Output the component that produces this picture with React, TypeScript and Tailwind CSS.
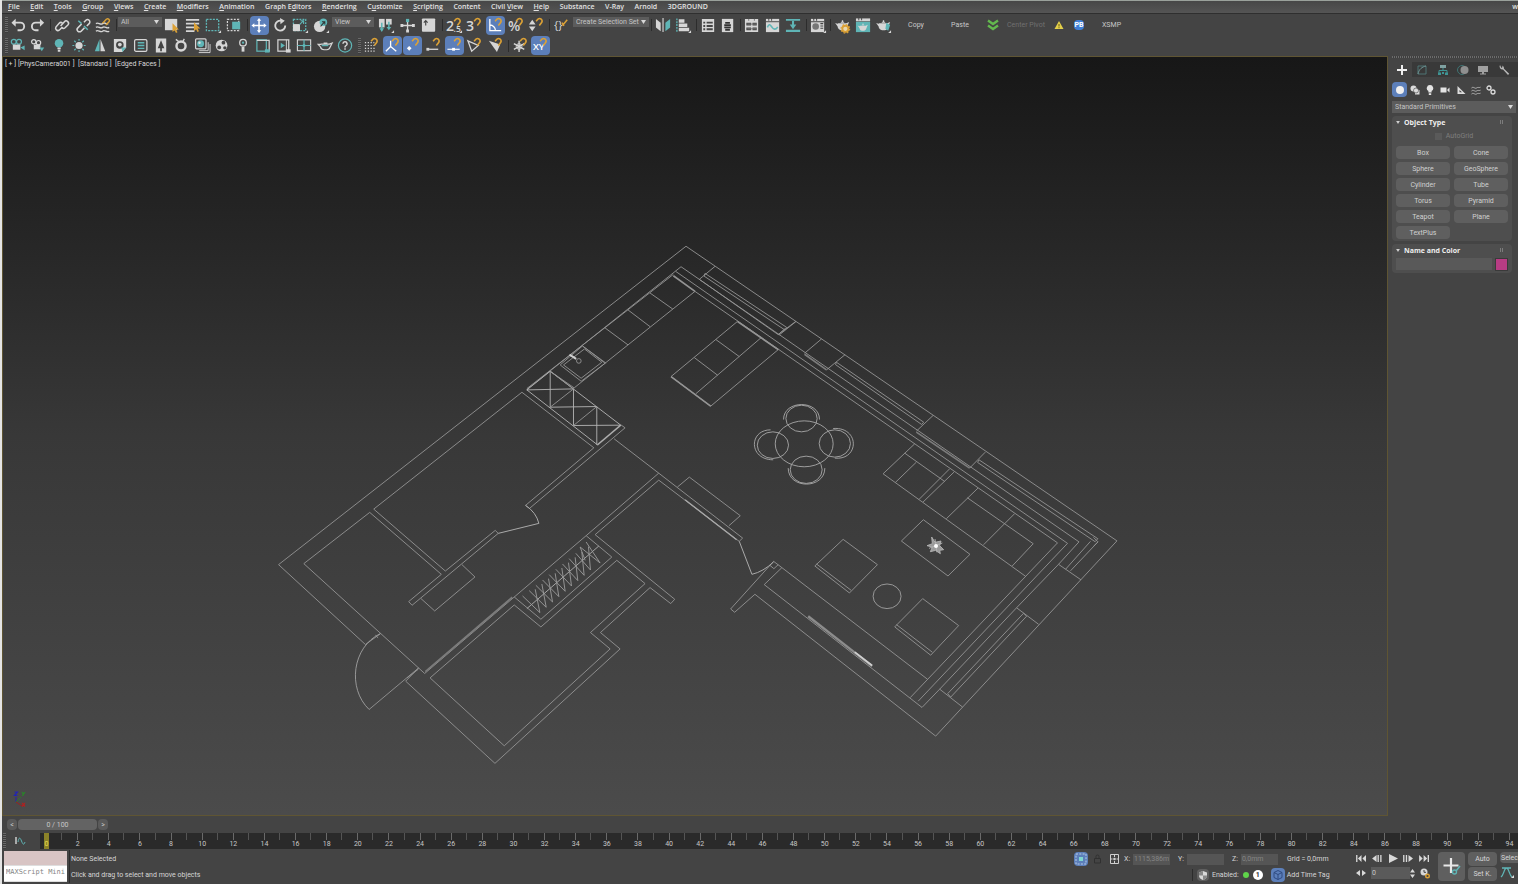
import React from "react";

const L = "#d6d6d6";
const T = "#5fb5b6";
const O = "#dba136";

const Hook = () => <path d="M8.6 4.6 10.6 2.2a2.7 2.7 0 0 1 4 3.4L12 9" fill="none" stroke={O} strokeWidth="1.7" />;
const Corner = () => <path d="M17 14v3h-3z" fill={L} />;
const Teapot = ({ c = L }: { c?: string }) => (
  <path d="M4.5 6.5h8.5l3-1.2-2 5c-.6 2.2-2 3.6-3.6 3.6H7.5C5.500 13.900 4 12 3.700 9.800L1.200 6.400l2.600.8zM7 6c.3-1.600 3.700-1.600 4 0zM8.300 3.400h1.400v1.600H8.300z" fill={c} />
);
const Line = ({ d, c = L, w = 1.6 }: { d: string; c?: string; w?: number }) => (
  <path d={d} fill="none" stroke={c} strokeWidth={w} />
);
const Fill = ({ d, c = L }: { d: string; c?: string }) => <path d={d} fill={c} fillRule="evenodd" />;

const icons: Record<string, React.ReactNode> = {
  undo: <><Line d="M4 6h7a4 4 0 0 1 0 8H8" w={2} /><Fill d="M1.500 6 6 1.800v8.400z" /></>,
  redo: <><Line d="M12 6H6a4 4 0 0 0 0 8h3" w={2} /><Fill d="M15 6l-4.500-4.200v8.400z" /></>,
  link: <><Line d="M7 9.500 11 5a2.500 2.500 0 0 1 3.700 3.400l-3 3a2.500 2.500 0 0 1-3.500-.2" /><Line d="M9 6.500a2.500 2.500 0 0 0-3.500.2l-3.500 4A2.500 2.500 0 0 0 5.500 14L9 10.500" /></>,
  unlink: <><Line d="M9.500 5.500 11.500 3.500A2.400 2.400 0 0 1 15 7l-2.500 2.500" /><Line d="M7 7.500 3 11.500A2.400 2.400 0 0 0 6.500 15L10 11.500" /><Line d="M3.500 4 7 7M9.500 9.500l4 4" c={T} /></>,
  bind: <><Line d="M1 7c2.500-2 4.500 2 7 0s3.500 1 6 0M1 11c2.500-2 4.500 2 7 0s4.500 2 7 0M1 15c2.500-2 4.500 2 7 0s4.500 2 7 0" w={1.400} /><Line d="M8 6.500 12 2.500a1.900 1.900 0 0 1 3 2.300L11.500 8.500" c={O} w={1.500} /></>,
  select: <><Fill d="M1 2h13v12H1z" /><Fill d="M9 6.500v9.500l2.200-2 1.500 3 1.600-.9-1.500-2.800h2.900z" c={O} /></>,
  selectList: <><Fill d="M1 2h14v2H1zM1 6h14v2H1zM1 10h9v2H1zM1 14h9v2H1z" /><Fill d="M9.500 5.500v9.500l2.200-2 1.500 3 1.600-.9-1.500-2.800h2.900z" c={O} /></>,
  region: <><rect x="1.500" y="2.500" width="13" height="12" fill="none" stroke={T} strokeWidth="1.400" strokeDasharray="2.200 1.200" /><Corner /></>,
  crossing: <><rect x="1.500" y="2.500" width="12" height="12" fill="none" stroke={L} strokeWidth="1.300" strokeDasharray="2 1.400" /><Fill d="M6.500 5h8.500v8H6.500z" c={T} /></>,
  move: <><Line d="M8.500 3v12M2.500 9h12" c="#fff" /><Fill d="m8.500 1 2.300 3H6.200zM8.500 17l2.300-3H6.200zM.5 9l3-2.300v4.600zM16.500 9l-3-2.300v4.600z" c="#fff" /></>,
  rotate: <><Line d="M10 4A5.300 5.300 0 1 0 14 9" w={2} /><Fill d="m8.500 1 5 3-4.500 3.800z" /></>,
  scale: <><rect x="1.500" y="2.500" width="13" height="12" fill="none" stroke={T} strokeWidth="1.400" strokeDasharray="2 1.200" /><Fill d="M1 7.500h7.500V15H1z" /><Line d="m8 8 4-4M9 4h3.300v3.300" c={T} w={1.200} /><Corner /></>,
  place: <><circle cx="7" cy="10" r="6" fill={L} /><circle cx="11" cy="5.500" r="4" fill={T} /><Line d="m8 10 4-4.500M9.500 5h3v3" c="#333" w={1.100} /><Corner /></>,
  pivot: <><Fill d="M1 2h6v9H1z" /><Fill d="M8.500 2h6v6h-6z" /><Line d="M4 6v8M11.500 5v7" c={T} /><Fill d="m4 16-2.400-4h4.800zM11.500 14 9 10.500h5z" c={T} /><Corner /></>,
  manip: <><Line d="M8 3v12M2 9h12" w={1.400} /><Fill d="M6.300 2h3.400v3.400H6.300z" c={T} /><Fill d="M6.500 13.300h3v3h-3zM.5 7.500h3v3h-3zM12.700 7.500h3v3h-3z" /></>,
  keyboard: <><rect x="1" y="1.500" width="14" height="14" rx="1" fill={L} /><Line d="M5 9V4M3 6l2-2.300L7 6" c="#444" w={1.200} /></>,
  snap25: <><text x="0" y="15" fontSize="15" fontWeight="600" fill={L} fontFamily="Open Sans, sans-serif">2</text><text x="8" y="16" fontSize="9" fontWeight="600" fill={L} fontFamily="Open Sans, sans-serif">.5</text><Hook /><Corner /></>,
  snap3: <><text x="0" y="15" fontSize="15" fontWeight="600" fill={L} fontFamily="Open Sans, sans-serif">3</text><Hook /></>,
  snapAngle: <><Line d="M3 2v12.500h12M3 8.500a6 6 0 0 1 6 6" c="#fff" w={1.400} /><Hook /></>,
  snapPercent: <><text x="0" y="15" fontSize="15" fontWeight="600" fill={L} fontFamily="Open Sans, sans-serif">%</text><Hook /></>,
  snapSpinner: <><Fill d="m4.500 3 3.500 5H1zM4.500 15l3.500-5H1z" /><Hook /></>,
  named: <><text x="0" y="13" fontSize="12" fill={L} fontFamily="Open Sans, sans-serif">{"{}"}</text><Line d="m9 9 5-6M8.500 6l2 3.500" c={O} w={1.600} /></>,
  mirror: <><Fill d="M1 2l5 4v9l-5-4z" /><Fill d="M16 2l-5 4v9l5-4z" c={T} /><Line d="M8.500 1v15" w={1.200} /></>,
  align: <><path d="M2 1.500v14" stroke={T} strokeWidth="1.400" strokeDasharray="2 1" /><Fill d="M4 2.500h6v3.500H4zM4 7h9v3.500H4zM4 11.500h11V15H4z" /><Corner /></>,
  layers: <><Fill d="M2 2h13v14H2zM3.500 5v2h2V5zM7 5v2h6.500V5zM3.500 8.500v2h2v-2zM7 8.500v2h6.500v-2zM3.500 12v2h2v-2zM7 12v2h6.500v-2z" /></>,
  ribbon: <><Fill d="M2 2h12v14H2z" /><Line d="M5.500 6.200h5M4.500 8.500h7M4.500 11h7M5.500 13.500h5" c="#333" w={1.900} /></>,
  curves: <><Fill d="M1 2h14v14H1zM2.500 6v3h5V6zM9 6v3h4.500V6zM2.500 11v3h5v-3zM9 11v3h4.500v-3z" /><Line d="M3.500 7.500h10M3.500 12.500h10M5 2v2M11 2v2" c="#777" w={1} /></>,
  schematic: <><Fill d="M1 2h14v14H1z" /><Line d="M1 5h14M4 1v3M7 1v3" c="#444" w={1} /><Line d="M2.500 11c2-5 3.500-2 5 0s3.500 3 6-.5" c={T} w={1.700} /></>,
  dope: <><Fill d="M1 2h15v2H1zM1 13.500h15V16H1z" c={T} /><Line d="M8.500 4v7" c={T} w={2.200} /><Fill d="M5 8h7l-3.500 5z" c={T} /></>,
  material: <><Fill d="M1 2h14v14H1z" /><circle cx="6" cy="10" r="3.500" fill="#777" /><Line d="M1 5h14M4 1v3M7 1v3M11 7h3M11 9.500h3M11 12h3" c="#444" w={1.100} /><Corner /></>,
  renderSetup: <><Teapot /><circle cx="12" cy="12.500" r="3.200" fill="#e8d8b0" stroke={O} strokeWidth="2" /><circle cx="12" cy="12.500" r="4.600" fill="none" stroke={O} strokeWidth="1.200" strokeDasharray="1.800 1.800" /></>,
  renderFrame: <><Fill d="M1 5h15v11H1z" c={T} /><Fill d="M1 1.500h15v3H1z" /><Line d="M4 1v2.500M7 1v2.500" c="#444" w={1} /><g transform="translate(2 4.500) scale(.72)"><Teapot /></g></>,
  render: <><Teapot /><Fill d="M12 6l4 2.500-2 6-3-2z" c={T} /><Corner /></>,
  vCam: <><circle cx="4" cy="5" r="2.600" fill="none" stroke={T} strokeWidth="1.300" /><circle cx="9.500" cy="5" r="2.600" fill="none" stroke={T} strokeWidth="1.300" /><Fill d="M3 8h8v5.500H3z" /><Fill d="m11 11 4.500-2v5z" c={T} /></>,
  vCam2: <><circle cx="4" cy="5" r="2.300" fill="none" stroke={L} strokeWidth="1.300" /><circle cx="9" cy="6" r="2.300" fill="none" stroke={L} strokeWidth="1.300" /><Fill d="M4 8h7v5H4z" /><Fill d="m12.500 15-2.500-4h5z" c={T} /></>,
  bulb: <><circle cx="8.500" cy="6.500" r="4.500" fill={T} /><Fill d="M6.800 11h3.500v2H6.800zM7.200 13.600h2.700v2H7.200z" /></>,
  sun: <><circle cx="8.500" cy="9" r="3.800" fill={L} /><path d="M8.500 2v2M8.500 14v2M1.500 9h2M13.500 9h2M3.500 4 5 5.500M12 12.500l1.500 1.500M13.500 4 12 5.500M5 12.500 3.500 14" stroke={T} strokeWidth="1.300" /></>,
  prism: <><Fill d="M8 2v13H3z" c={T} /><Fill d="M9 2l5 13H9z" /></>,
  hdri: <><Fill d="M2 2h13v9l-4 5H2z" /><circle cx="8.300" cy="8.500" r="4" fill="#444" /><circle cx="8.300" cy="8" r="2" fill={L} /><Fill d="M10 11h5l-4 5z" c={T} /></>,
  notes: <><rect x="1.700" y="2.700" width="13" height="12.500" rx="1.500" fill="none" stroke={L} strokeWidth="1.300" /><Line d="M5 6h7M5 9h7M5 12h7" c={T} w={1.500} /></>,
  tree: <><Fill d="M3 1.500h11v15H3zM8.500 3.500 5 12h2.600v3h1.800v-3H12z" /></>,
  ring: <><circle cx="8.500" cy="9.500" r="4.800" fill="none" stroke={L} strokeWidth="2.600" /><Line d="m3 2.500 4 3M12 2l-2 3.500" w={1.400} /></>,
  stack: <><Line d="M5.500 14.500h9.500v-9" w={1} /><Line d="M5 16.500h12v-9" w={1} /><rect x="1.700" y="2" width="11" height="10.500" rx="1" fill="none" stroke={L} strokeWidth="1.300" /><circle cx="7" cy="7.200" r="3.700" fill={T} /><circle cx="5.800" cy="6" r="1.300" fill="#ddd" /></>,
  palette: <><circle cx="8" cy="9" r="6.200" fill={L} /><circle cx="10" cy="6" r="2" fill="#444" /><circle cx="5.500" cy="11" r="2" fill="#444" /><circle cx="11.500" cy="11.500" r="1.800" fill="#444" /></>,
  lamp: <><circle cx="8.500" cy="6" r="3.500" fill="none" stroke={L} strokeWidth="1.400" /><circle cx="8.500" cy="6" r="1.200" fill={T} /><Fill d="M7 10.500h3v5H7z" /></>,
  winA: <><rect x="2" y="3" width="10" height="12" fill="none" stroke={T} strokeWidth="1.300" /><Line d="M2 3.500h13v12" w={1.300} /><Fill d="M10.500 13h5v3.500h-5z" c={T} /></>,
  winB: <><rect x="2" y="3" width="11.500" height="12" fill="none" stroke={L} strokeWidth="1.300" /><Line d="M11 3v12" w={1} /><Fill d="m5 6 4.500 3L5 12z" c={T} /><Fill d="M10.500 13h5v3.500h-5z" /></>,
  grid4: <><rect x="1.500" y="3" width="14" height="11.500" fill="none" stroke={L} strokeWidth="1.200" /><Line d="M1.500 9h14M8.500 3v11.500" c={T} w={1.300} /><circle cx="8.500" cy="9" r="1.600" fill={T} /></>,
  pot: <g transform="translate(0 1)"><path d="M4.500 6.500h8.500l3-1-2 4c-.6 1.800-2 3-3.600 3H7.500c-2 0-3.500-1.500-3.800-3L1.200 6.800h2.600zM7 5.500h4" fill="none" stroke={L} strokeWidth="1.300" /><path d="M5 8h7" stroke={T} strokeWidth="1.500" /></g>,
  help: <><circle cx="8.500" cy="9" r="7" fill="none" stroke={T} strokeWidth="1.300" /><Line d="M6.300 7.200a2.200 2.200 0 1 1 2.900 2.200c-.5.300-.7.700-.7 1.600M8.500 12v1.600" /></>,
  snapGrid: <><path d="M2 6h10M2 9h12M2 12h12M2 15h12" stroke={L} strokeWidth="1.300" strokeDasharray="1.300 1.700" /><Hook /></>,
  snapAxis: <><Line d="M7 4v6l-5 5M7 10l6 5" c="#fff" w={1.400} /><Hook /></>,
  snapPoint: <><Fill d="M5.500 9.500 8 12l-2.500 2.500L3 12z" c="#fff" /><Hook /></>,
  snapEnd: <><Line d="M2 13h12" w={1.400} /><Fill d="M1.500 11.500h3v3h-3z" /><Hook /></>,
  snapMid: <><Line d="M1.500 13h13" c="#fff" w={1.200} /><Fill d="M6.500 11.500h3v3h-3z" c="#fff" /><Hook /></>,
  snapFace: <><path d="m2 4 11 5-7 6z" fill="none" stroke={L} strokeWidth="1.400" /><Hook /></>,
  snapSolid: <><Fill d="m2 4 12 4-3.500 8z" /><Hook /></>,
  freeze: <><Line d="M7.500 4v12M2 7l11 6M13 7 2 13" w={1.500} /><circle cx="7.500" cy="10" r="3" fill="none" stroke={L} strokeWidth="1" /><Hook /></>,
  snapXY: <><text x="1" y="14" fontSize="10" fontWeight="600" fill="#fff" fontFamily="Open Sans, sans-serif">XY</text><Hook /></>,
};

function Tool({ name, on }: { name: string; on?: boolean }) {
  return (
    <button aria-label={name} className="flex h-[20px] flex-1 items-center justify-center">
      <span className={on ? "flex h-[19px] w-[19px] items-center justify-center rounded-sm bg-[#5c7fba]" : "flex h-[19px] w-[19px] items-center justify-center"}>
        <svg width="17" height="17" viewBox="0 0 18 18" aria-hidden="true">{icons[name]}</svg>
      </span>
    </button>
  );
}

function Group({ names, on = [], w }: { names: string[]; on?: string[]; w: string }) {
  return (
    <div className={`flex shrink-0 ${w}`}>
      {names.map((n) => <Tool key={n} name={n} on={on.includes(n)} />)}
    </div>
  );
}

const Sep = () => <div className="flex w-1 shrink-0 justify-center"><span className="h-3 w-px bg-[#2c2c2c]" /></div>;
const Grip = () => <div className="h-4 w-[3px] shrink-0 bg-[repeating-linear-gradient(#6a6a6a_0_1px,#3c3c3c_1px_2px)]" />;

function Drop({ label, value, cls }: { label: string; value: string; cls: string }) {
  return (
    <div className={`relative shrink-0 ${cls}`}>
      <select aria-label={label} className="h-full w-full appearance-none rounded-none bg-[#5c5c5c] pl-[3px] leading-none text-[#c4c4c4] outline-none">
        <option>{value}</option>
      </select>
      <svg className="pointer-events-none absolute top-1/2 right-[3px] -translate-y-1/2" width="5" height="4" viewBox="0 0 5 4" aria-hidden="true"><path d="M0 0h5L2.500 4z" fill="#d8d8d8" /></svg>
    </div>
  );
}

const menus = ["File", "Edit", "Tools", "Group", "Views", "Create", "Modifiers", "Animation", "Graph Editors", "Rendering", "Customize", "Scripting", "Content", "Civil View", "Help", "Substance", "V-Ray", "Arnold", "3DGROUND"];
const accel: Record<string, number> = { File: 0, Edit: 0, Tools: 0, Group: 0, Views: 0, Create: 0, Modifiers: 0, Animation: 0, "Graph Editors": 7, Rendering: 0, Customize: 1, Scripting: 0, "Civil View": 6, Help: 0 };

function MenuBar() {
  return (
    <nav className="flex h-[14px] shrink-0 items-center justify-between overflow-hidden border-t border-b border-t-[#9aa19b] border-b-[#2f2f2f] bg-linear-to-b from-[#474747] to-[#555555] pb-px pl-[6px] font-['Open_Sans',sans-serif] text-[7px] leading-none font-semibold whitespace-nowrap text-[#e2e2e2]">
      <div className="flex w-[700px] justify-between">
        {menus.map((m) => {
          const i = accel[m];
          return (
            <button key={m} className="shrink-0">
              {i === undefined ? m : <>{m.slice(0, i)}<u>{m[i]}</u>{m.slice(i + 1)}</>}
            </button>
          );
        })}
      </div>
      <span>w</span>
    </nav>
  );
}

function Toolbars() {
  return (
    <header className="shrink-0 overflow-hidden bg-[#444444] text-[#c8c8c8]">
      <div className="flex h-[21px] items-center pt-px pl-[3px]">
        <Grip />
        <Group names={["undo", "redo"]} w="w-10" />
        <Sep />
        <Group names={["link", "unlink", "bind"]} w="w-[62px]" />
        <Sep />
        <Drop label="Selection filter" value="All" cls="h-[10px] w-11 self-start mt-[2px]" />
        <Group names={["select", "selectList", "region", "crossing"]} w="w-[83px]" />
        <Sep />
        <Group names={["move", "rotate", "scale", "place"]} on={["move"]} w="w-[83px]" />
        <Drop label="Reference coordinate system" value="View" cls="h-[10px] w-[42px] self-start mt-[2px]" />
        <Group names={["pivot"]} w="w-6" />
        <Group names={["manip", "keyboard"]} w="w-[42px]" />
        <Sep />
        <Group names={["snap25", "snap3", "snapAngle", "snapPercent", "snapSpinner"]} on={["snapAngle"]} w="w-[103px]" />
        <Sep />
        <Group names={["named"]} w="w-[22px]" />
        <Drop label="Named selection set" value="Create Selection Set" cls="h-[10px] w-[76px] self-start mt-[2px]" />
        <Sep />
        <Group names={["mirror", "align"]} w="w-[41px]" />
        <Sep />
        <Group names={["layers", "ribbon"]} w="w-10" />
        <Sep />
        <Group names={["curves", "schematic", "dope"]} w="w-[62px]" />
        <Sep />
        <Group names={["material"]} w="w-5" />
        <Sep />
        <Group names={["renderSetup", "renderFrame", "render"]} w="w-[62px]" />
        <button className="w-11 text-center">Copy</button>
        <button className="w-11 text-center">Paste</button>
        <button className="ml-[5px] flex items-center gap-2 whitespace-nowrap text-[#707070]">
          <svg width="12" height="12" viewBox="0 0 12 12" aria-hidden="true"><path d="m1 1.500 5 3.500 5-3.500M1 6.500 6 10l5-3.500" fill="none" stroke="#63b94e" strokeWidth="2.400" /></svg>
          Center Pivot
        </button>
        <button aria-label="Warning" className="ml-[9px]">
          <svg width="10" height="10" viewBox="0 0 10 10" aria-hidden="true"><path d="M5 1 9.500 9H.500z" fill="#e3cf4a" /><path d="M5 4v2.500M5 7.200v1" stroke="#6a5a10" strokeWidth="1" /></svg>
        </button>
        <button className="ml-[10px] h-[10px] w-[10px] rounded-sm bg-[#3f7fd6] leading-none font-bold text-white">PB</button>
        <button className="ml-[18px]">XSMP</button>
      </div>
      <div className="flex h-[21px] items-center pl-[3px]">
        <Grip />
        <Group names={["vCam", "vCam2", "bulb", "sun", "prism", "hdri", "notes", "tree", "ring", "stack", "palette", "lamp", "winA", "winB", "grid4", "pot", "help"]} w="w-[348px]" />
        <div className="w-[2px]" />
        <Grip />
        <Group names={["snapGrid", "snapAxis", "snapPoint", "snapEnd", "snapMid", "snapFace", "snapSolid"]} on={["snapAxis", "snapPoint", "snapMid"]} w="w-[145px]" />
        <Sep />
        <Group names={["freeze", "snapXY"]} on={["snapXY"]} w="w-[41px]" />
      </div>
    </header>
  );
}

const range = (n: number) => Array.from({ length: n }, (_, i) => i);

function FloorPlan() {
  const s = "scale(.33333)";
  return (
    <svg className="h-full w-full" viewBox="3 56 1384 759" fill="none" stroke="#949494" strokeWidth="0.900" role="img" aria-label="Wireframe floor plan">
      {/* Shell: outer and inner walls */}
      <path d="M365 644.300 278 564.300 686 245.500 1117.500 540.500 936 736 755 594 734.700 612 730.700 608.700 773.700 561 782 567.300 927.700 679M365 644.300 380 633.500" />
      <path d="M782 567.300 764.300 584.300 922.300 707.300 940 689 963 707M940 689 1017 607.500 1039 624M1017 607.500 1059 564 1081.500 579.500M1059 564 1079.500 541.500" />
      <path d="M910.500 697.500 1058 542.500 695 290.700M918.500 701 1068 543 675.700 270.700M681 266 1079.500 541.500M681 266 526.500 389" />
      <path d="M1024 613 948 693.500M1027 616 951 697M1024 613l3 3M948 693.500l3 3.500M1091 541l-25 28M1098.500 541.500 1071 570.500M1094 537l4.500 4.500-4 4" />
      <path d="M521.700 391.700 593.700 447.300 525.300 505 529.300 508 625 427.300 621 424.500M521.700 391.700 373.300 508.700 445 570.700 495 530 498 533 411.700 605 408.300 601.300 441 574 369.300 512 303.300 563.300 424.300 673.300 586 535.300 658.700 472.700M614 438.300 658.700 472.700 742.700 537.700 739.300 541 658.700 479.700 595 534.300 674.700 599 670.700 603.300 650 587.300 600.300 632.300 620 648.700 494.700 763.300 405.300 681 418.300 667.700" />
      <path d="M429.700 677.700 514 604.700 540.700 626.700 616.700 560 645 583.300 590.300 632.300 610 648.700 504 745.700Z" />
      <path d="M514 596.700 540.700 619 611.700 556.700 586 535.300" />
      <path d="M425 671.500 512 597" strokeWidth="1.800" stroke="#7c7c7c" />

      {/* Kitchen run, wardrobe and island */}
      <g transform={`translate(500 230) ${s}`} strokeWidth="2.700">
        <path d="M598 146 645 107M598 146 835 312 888 272M835 312l20-18M615 128 860 290M612 136 855 298M615 128l-3 8M860 290l-5 8" />
        <path d="M585 182 222 472 150 422M520 131 80 474" />
        <path d="M520 135 585 182M713 273 835 357M513 438 632 527M362 584 292 643" strokeWidth="5" />
        <path d="M450 187 518 235M384 238 450 288M315 292 384 343M247 346 318 398" />
        <path d="M247 346 315 398 243 452 180 403ZM253 355 305 395 243 443 190 403Z" />
        <path d="M208 372 228 385" stroke="#d0d0d0" strokeWidth="6" />
        <circle cx="236" cy="391" r="7" />
        <path d="M80 478 150 422 362 584 292 643ZM150 422V530M220 475V585M290 528V643M80 478 220 475M150 530 290 528M220 585 362 584" stroke="#b4b4b4" />
        <path d="M220 475 150 530M290 528 220 585M150 422 220 475" />
        <path d="M513 438 713 272 835 357 632 527ZM587 490 785 320M648 327 718 378M583 381 653 434" />
      </g>

      {/* Window bays, dining set, sofa and armchair */}
      <g transform={`translate(720 300) ${s}`} strokeWidth="2.700">
        <path d="M178 103 228 63M305 115 254 158M320 208 376 162M590 392 640 345M750 503 797 455" />
        <path d="M254 161 320 208M590 395 750 503" strokeWidth="5" stroke="#7c7c7c" />
        <path d="M350 185 612 365 606 372 347 192ZM778 478 1135 715 1127 724 774 486Z" />
        <g stroke="#a8a8a8">
          <ellipse cx="253" cy="430" rx="87" ry="69" />
          <ellipse cx="245" cy="354" rx="47" ry="40" />
          <ellipse cx="159" cy="434" rx="47" ry="40" />
          <ellipse cx="345" cy="429" rx="47" ry="41" />
          <ellipse cx="259" cy="508" rx="48" ry="41" />
          <path d="M191 357C191 297 299 297 299 357M152 388C86 388 86 478 160 478M340 384C420 378 420 480 345 473M205 503C205 567 315 567 315 503" />
        </g>
        <path d="M490 520 585 430M490 520 918 828M555 458 675 543M527 546 590 485M598 597 690 505M610 605 703 515M680 655 775 563M743 592 941 730 878 797M792 733 885 640" />
        <path d="M611 658 751 762 685 827 545 722Z" />
        <path d="M370 717 473 793 389 878 285 797ZM290 791 394 870" />
        <path d="M636 710 646 726 664 722 660 736 672 748 660 750 662 760 648 750 632 754 638 740 622 736 638 730ZM628 744 668 728M646 716 652 756" fill="#9a9a9a" stroke="#b4b4b4" />
        <circle cx="649" cy="737" r="6" fill="#fff" stroke="none" />
      </g>

      {/* Living room: side table, chair, console and TV unit */}
      <g transform={`translate(660 460) ${s}`} strokeWidth="2.700">
        <ellipse cx="682" cy="408" rx="42" ry="37" stroke="#a0a0a0" />
        <path d="M789 415 897 496 813 585 705 500ZM710 493 818 576" />
        <path d="M52 80 88 50 241 166 207 196M330 315 342 325 355 313" />
        <path d="M75 118 230 238" strokeWidth="4" stroke="#a8a8a8" />
        <path d="M238 243 276 342Q310 334 341 305" stroke="#aaaaaa" strokeWidth="3" />
        <path d="M445 468 637 618" strokeWidth="7" stroke="#8c8c8c" />
        <path d="M585 576 637 616" stroke="#cfcfcf" strokeWidth="5" />
      </g>

      {/* Doors, cloakroom cabinet and closet hangers */}
      <g transform={`translate(260 380) ${s}`} strokeWidth="2.700">
        <path d="M714 459 836 429Q828 396 796 375" stroke="#aaaaaa" strokeWidth="3" />
        <path d="M605 553 644 590 523 692 482 655M475 863 326 988M345 765l8 8M440 893l34-26" />
        <path d="M326 988C260 925 275 800 360 760" stroke="#a0a0a0" />
        <path d="M800 685 1016 497" stroke="#b0b0b0" />
        {range(9).map((i) => (
          <path key={i} d={`M${787 + i * 20} ${647 - i * 16}l${52 - i} 50l${-14 + i} -70`} stroke="#9c9c9c" />
        ))}
        <path d="M978 485 1020 548 960 500 975 540" stroke="#9c9c9c" />
      </g>
    </svg>
  );
}

function Viewport() {
  return (
    <main className="relative min-w-0 flex-1 overflow-hidden border border-[#5f5533] bg-linear-to-b from-[#171717] via-[#383838] to-[#4b4b4b] text-[#d8d8d8]">
      <FloorPlan />
      <p className="absolute top-[3px] left-[2px] whitespace-pre">[ + ] [PhysCamera001 ]  [Standard ]  [Edged Faces ]</p>
      <svg className="absolute bottom-[6px] left-[10px]" width="18" height="18" viewBox="0 0 18 18" aria-hidden="true">
        <path d="M3 11V6" stroke="#2525a8" /><path d="m3 11 5-5" stroke="#2a7a2a" /><path d="m3 11 6 4" stroke="#9a2020" />
        <path d="M1.500 1h3l-3 3.500h3" fill="none" stroke="#2222b8" strokeWidth="1.200" />
        <path d="m9 1 1.500 2L12 1M10.500 3 9.500 5" fill="none" stroke="#268a26" strokeWidth="1.200" />
        <path d="m9 12 3 3.500M12 12l-3 3.500" fill="none" stroke="#b02020" strokeWidth="1.200" />
      </svg>
    </main>
  );
}

const tabIcons: [string, React.ReactNode][] = [
  ["Create", <path key="a" d="M6 1v10M1 6h10" stroke="#f0f0f0" strokeWidth="2" />],
  ["Modify", <g key="b" fill="none"><path d="M2 2h8v8H2z" stroke="#4f7474" /><path d="M2 10C3 5 6 3 10 2" stroke="#6e9494" /></g>],
  ["Hierarchy", <g key="c"><path d="M3 1h6v3H3z" fill="#7fa0a0" /><path d="M6 4v3M2 9V6.500h8V9" stroke="#3f9494" fill="none" /><path d="M1 8.500h3V11H1zM8 8.500h3V11H8zM5 8h2v2H5z" fill="#3f9494" /></g>],
  ["Motion", <g key="d"><circle cx="5" cy="6" r="4.500" fill="none" stroke="#3f7474" /><circle cx="7.500" cy="6" r="4" fill="#8f8f8f" /></g>],
  ["Display", <path key="e" d="M1 2h10v6H1zM5 8h2v1.500h2v1H3v-1h2z" fill="#a0a0a0" />],
  ["Utilities", <path key="f" d="M2 1a3 3 0 0 0 3 4.500L10 11l1.200-1.200L6 4.800A3 3 0 0 0 4 1.500L4.500 3 3.500 4z" fill="#b8b8b8" />],
];

const catIcons: [string, React.ReactNode][] = [
  ["Geometry", <circle key="a" cx="5" cy="5" r="4" fill="#f0f0f0" />],
  ["Shapes", <g key="b" fill="#dcdcdc"><circle cx="3.500" cy="3.500" r="3" /><path d="M5 5h4.500v4.500H5z" /><circle cx="6" cy="5.500" r="2.500" stroke="#444" strokeWidth=".6" /></g>],
  ["Lights", <path key="c" d="M5 0a3.200 3.200 0 0 0-1.600 6v1.500h3.200V6A3.200 3.200 0 0 0 5 0zM3.800 8.200h2.400V10H3.800z" fill="#e4e4e4" />],
  ["Cameras", <path key="d" d="M.5 2.500h6v5h-6zM7 5l2.500-2.500v5z" fill="#e4e4e4" />],
  ["Helpers", <path key="e" d="M1.500 1v8h8zM3.500 5v2.200h2.500z" fill="#dcdcdc" fillRule="evenodd" />],
  ["Space Warps", <path key="f" d="M.5 3c2-2 3.500 1.200 5 0s2.500 0 4-.8M.5 6c2-2 3.500 1.200 5 0s2.500 0 4-.8M.5 9c2-2 3.500 1.200 5 0s2.500 0 4-.8" fill="none" stroke="#b4b4b4" />],
  ["Systems", <g key="g" fill="none" stroke="#dcdcdc" strokeWidth="1.300"><circle cx="3" cy="3" r="2" /><circle cx="7" cy="7" r="2" /></g>],
];

function Rollout({ title, children }: { title: string; children: React.ReactNode }) {
  return (
    <section className="mr-[6px] rounded-sm bg-[#4e4e4e] px-1 pb-[2px]">
      <h2 className="flex h-3 items-center gap-1 font-['Open_Sans',sans-serif] text-[7px] leading-none font-bold text-[#ededed]">
        <svg width="4" height="3" viewBox="0 0 5 4" aria-hidden="true"><path d="M0 0h5L2.500 4z" fill="#d0d0d0" /></svg>
        {title}
        <span className="mr-1 ml-auto h-1 w-1 bg-[repeating-linear-gradient(90deg,#7c7c7c_0_1px,transparent_1px_2px)]" />
      </h2>
      {children}
    </section>
  );
}

function CommandPanel() {
  return (
    <aside className="w-[130px] shrink-0 overflow-hidden bg-[#444444] pl-1 text-[#d0d0d0]">
      <div className="h-[2px] bg-[repeating-linear-gradient(90deg,#6c6c6c_0_1px,#3e3e3e_1px_2px)]" />
      <div className="mt-1 flex h-[15px] bg-[#393939] pr-1">
        {tabIcons.map(([n, icon], i) => (
          <button key={n} aria-label={n} className={i === 0 ? "flex flex-1 items-center justify-center bg-[#444444]" : "flex flex-1 items-center justify-center"}>
            <svg width="12" height="12" viewBox="0 0 12 12" aria-hidden="true">{icon}</svg>
          </button>
        ))}
      </div>
      <div className="mt-[5px] flex w-[107px]">
        {catIcons.map(([n, icon], i) => (
          <button key={n} aria-label={n} className={i === 0 ? "flex h-[15px] flex-1 items-center justify-center rounded-sm bg-[#5c7fba]" : "flex h-[15px] flex-1 items-center justify-center"}>
            <svg width="10" height="10" viewBox="0 0 10 10" aria-hidden="true">{icon}</svg>
          </button>
        ))}
      </div>
      <Drop label="Object category" value="Standard Primitives" cls="mt-1 mr-[2px] h-3" />
      <div className="mt-[3px] flex flex-col gap-[3px]">
        <Rollout title="Object Type">
          <label className="mt-[2px] mb-1 flex h-3 items-center justify-center gap-1 pl-1 text-[#7e7e7e]">
            <input type="checkbox" className="h-[7px] w-[7px] appearance-none bg-[#5a5a5a]" />
            AutoGrid
          </label>
          <div className="grid grid-cols-2 gap-x-1 gap-y-[3px]">
            {["Box", "Cone", "Sphere", "GeoSphere", "Cylinder", "Tube", "Torus", "Pyramid", "Teapot", "Plane", "TextPlus"].map((b) => (
              <button key={b} className="h-[13px] rounded-sm bg-[#5f5f5f] pt-px leading-none">{b}</button>
            ))}
          </div>
        </Rollout>
        <Rollout title="Name and Color">
          <div className="mt-[2px] flex h-[13px] gap-[3px]">
            <input aria-label="Object name" className="h-3 min-w-0 flex-1 bg-[#595959]" />
            <button aria-label="Object color" className="w-[13px] border border-[#3a3a3a] bg-[#b83c84]" />
          </div>
        </Rollout>
      </div>
    </aside>
  );
}

function Timeline() {
  return (
    <section className="flex shrink-0 flex-col bg-[#444444] pt-[3px] text-[#c8c8c8]">
      <div className="flex h-[11px] items-stretch gap-px pl-[5px] leading-none">
        <button className="w-[10px] rounded-sm bg-[#5a5a5a] pt-px">&lt;</button>
        <button className="w-[79px] rounded-sm bg-[#636363] pt-px">0 / 100</button>
        <button className="w-[10px] rounded-sm bg-[#5a5a5a] pt-px">&gt;</button>
      </div>
      <div className="mt-[3px] flex h-4">
        <div className="flex w-[38px] shrink-0 items-center gap-2 pl-px">
          <Grip />
          <button aria-label="Open mini curve editor">
            <svg width="12" height="10" viewBox="0 0 12 10" aria-hidden="true"><path d="M2 1v7" stroke="#ccc" strokeWidth="1.500" /><path d="M4 6c1-5 2-5 3.500-1S10 9 11 6" fill="none" stroke={T} /></svg>
          </button>
        </div>
        <div className="min-w-0 flex-1 overflow-hidden bg-[#2a2a2a]">
          <div className="-mr-[7px] -ml-[9px] flex h-full">
            {range(48).map((i) => (
              <div key={i} className="flex min-w-0 flex-1 justify-center">
                <div className="h-2 flex-1" />
                <div className={i === 0 ? "flex h-full w-[5px] flex-col items-center bg-[#8b8228] leading-none text-[#e8dc50]" : "flex h-full w-[5px] flex-col items-center leading-none"}>
                  <span className={i === 0 ? "h-[7px] w-px shrink-0" : "h-[7px] w-px shrink-0 bg-[#6a6a6a]"} />
                  <span className="mt-px">{i * 2}</span>
                </div>
                <div className="flex h-[7px] flex-1 justify-end"><span className="w-px bg-[#555555]" /></div>
              </div>
            ))}
          </div>
        </div>
      </div>
    </section>
  );
}

function Coord({ label, value }: { label: string; value: string }) {
  return (
    <label className="flex items-center gap-[3px]">
      {label}:
      <input defaultValue={value} className="h-[11px] w-[37px] bg-[#555555] px-px text-[#858585]" />
    </label>
  );
}

const play: [string, string][] = [
  ["Go to start", "M0 1h1.500v8H0zM6 1v8L2 5zM11 1v8L7 5z"],
  ["Previous frame", "M5 1v8L0 5zM6 1h1.500v8H6zM9 1h1.500v8H9z"],
  ["Play", "M1 0v10l10-5z"],
  ["Next frame", "M0 1h1.500v8H0zM3 1h1.500v8H3zM6 1v8l5-4z"],
  ["Go to end", "M0 1v8l4-4zM5 1v8l4-4zM9.500 1H11v8H9.500z"],
];

function StatusBar() {
  return (
    <footer className="flex h-[35px] shrink-0 overflow-hidden bg-[#444444] whitespace-nowrap text-[#d6d6d6]">
      <div className="mt-[2px] ml-[2px] flex h-[31px] w-[63px] shrink-0 flex-col gap-px bg-[#dedede] font-['DejaVu_Sans_Mono',monospace] text-[7px] text-[#858585]">
        <input aria-label="Macro recorder" className="h-[14px] w-full bg-[#d8c4c4]" />
        <input aria-label="Script listener" defaultValue="MAXScript Mini" className="mb-px h-[15px] w-full bg-white px-[2px] pb-1" />
      </div>
      <div className="flex w-1 shrink-0 justify-center py-px"><span className="w-px bg-[#2c2c2c]" /></div>
      <div className="flex flex-col pt-px">
        <p className="flex h-[17px] items-center">None Selected</p>
        <p className="flex h-4 items-center">Click and drag to select and move objects</p>
      </div>
      <div className="mt-[3px] ml-auto flex w-[282px] shrink-0 flex-col gap-[2px]">
        <div className="flex h-[14px] items-center">
          <button aria-label="Isolate selection" className="flex h-[14px] w-[14px] items-center justify-center rounded-sm bg-[#5c7fba]">
            <svg width="12" height="12" viewBox="0 0 12 12" aria-hidden="true"><path d="M1 1h10v10H1z" fill="none" stroke="#b8cce8" strokeDasharray="2 1.300" /><path d="M4 4h4v4H4z" fill="#7fd6d0" /></svg>
          </button>
          <button aria-label="Lock selection" className="ml-[6px]">
            <svg width="7" height="10" viewBox="0 0 7 10" aria-hidden="true"><path d="M.5 4.500h6V9h-6zM2 4.500V2.500a1.500 1.500 0 0 1 3 0v2" fill="none" stroke="#303030" /></svg>
          </button>
          <button aria-label="Absolute mode" className="ml-[9px]">
            <svg width="9" height="10" viewBox="0 0 9 10" aria-hidden="true"><path d="M.5.500h8v9h-8zM4.500 0v3M4.500 7v3M0 5h2.500M6.500 5H9" fill="none" stroke="#cfcfcf" /><circle cx="4.500" cy="5" r="1.300" fill="#cfcfcf" /></svg>
          </button>
          <div className="ml-[5px] flex gap-[8px]">
            <Coord label="X" value="1115,386mm" />
            <Coord label="Y" value="" />
            <Coord label="Z" value="0,0mm" />
          </div>
          <span className="ml-[9px]">Grid = 0,0mm</span>
        </div>
        <div className="flex h-[14px] items-center pl-[118px]">
          <span className="h-3 w-px bg-[#2c2c2c]" />
          <button aria-label="Security" className="ml-1 flex h-3 w-3 items-center justify-center rounded-sm bg-[#5f5f5f]">
            <svg width="8" height="9" viewBox="0 0 8 9" aria-hidden="true"><path d="M4 0 8 1.500v3Q8 7.500 4 9 0 7.500 0 4.500v-3z" fill="#d8d8d8" /><path d="M4 4.500h4Q8 7.500 4 9zM0 1.500 4 0v4.500H0z" fill="#888" /></svg>
          </button>
          <span className="ml-[3px]">Enabled:</span>
          <span className="ml-1 h-[6px] w-[6px] rounded-full bg-[#5fd44a]" />
          <span className="ml-[4px] flex h-[10px] w-[10px] items-center justify-center rounded-full bg-white leading-none font-bold text-[#333]">1</span>
          <button className="ml-2 flex items-center gap-[2px]">
            <span className="flex h-[14px] w-[14px] items-center justify-center rounded-sm bg-[#5c7fba]">
              <svg width="10" height="10" viewBox="0 0 10 10" aria-hidden="true"><path d="m5 .5 4 2v5l-4 2-4-2v-5zM1 2.500l4 2 4-2M5 4.500v5" fill="none" stroke="#2f4a80" /></svg>
            </span>
            Add Time Tag
          </button>
        </div>
      </div>
      <div className="mt-[3px] flex w-[74px] shrink-0 flex-col gap-[2px]">
        <div className="flex h-3 items-center justify-between">
          {play.map(([n, d]) => (
            <button key={n} aria-label={n}><svg width="11" height="9" viewBox="0 0 12 10" aria-hidden="true"><path d={d} fill="#d8d8d8" /></svg></button>
          ))}
        </div>
        <div className="flex h-[14px] items-center">
          <button aria-label="Key mode"><svg width="10" height="8" viewBox="0 0 10 8" aria-hidden="true"><path d="M4 1v6L0 4zM6 1v6l4-3z" fill="#d8d8d8" /></svg></button>
          <input aria-label="Current frame" defaultValue="0" className="ml-[5px] h-3 w-[39px] bg-[#5a5a5a] px-px text-[#c8c8c8]" />
          <svg width="5" height="9" viewBox="0 0 5 9" aria-hidden="true"><path d="M2.500 0 5 3.500H0zM2.500 9 5 5.500H0z" fill="#d8d8d8" /></svg>
          <button aria-label="Time configuration" className="ml-[5px]">
            <svg width="10" height="11" viewBox="0 0 10 11" aria-hidden="true"><circle cx="4" cy="4" r="3.500" fill="#d8d8d8" /><path d="M4 2v2.300h2" stroke="#444" fill="none" /><circle cx="7.500" cy="8" r="1.800" fill="none" stroke={O} strokeWidth="1.400" /></svg>
          </button>
        </div>
      </div>
      <button aria-label="Set key" className="mt-[3px] ml-2 flex h-[29px] w-[27px] shrink-0 items-center justify-center rounded-sm bg-[#5f5f5f]">
        <svg width="20" height="20" viewBox="0 0 20 20" aria-hidden="true"><path d="M9 1v15M1.500 8.500h15" stroke="#e8e8e8" strokeWidth="2.200" /><circle cx="12.500" cy="15" r="2" fill="none" stroke={T} strokeWidth="1.300" /><path d="m14 14 4-5" stroke={T} strokeWidth="1.500" /></svg>
      </button>
      <div className="mt-[3px] ml-[3px] flex w-[29px] shrink-0 flex-col gap-px">
        <button className="h-[14px] rounded-sm bg-[#5f5f5f] leading-none">Auto</button>
        <button className="h-[14px] rounded-sm bg-[#5f5f5f] leading-none">Set K.</button>
      </div>
      <div className="mt-[3px] ml-[3px] flex w-[18px] shrink-0 flex-col gap-[3px]">
        <button className="h-[11px] rounded-l-sm bg-[#5f5f5f] pt-px pl-px text-left leading-none">Selec</button>
        <button aria-label="Tangent type"><svg width="14" height="13" viewBox="0 0 14 13" aria-hidden="true"><path d="M1 11C4 9 4 2 6.500 2S9 9 12 11M2 2h9" fill="none" stroke={T} strokeWidth="1.300" /><path d="M14 9v3h-3z" fill="#ddd" /></svg></button>
      </div>
    </footer>
  );
}

export default function App() {
  return (
    <div className="flex h-screen flex-col overflow-hidden border-l-2 border-[#e4e4e4] bg-[#444444] font-[Roboto,sans-serif] text-[7px] leading-[8px]">
      <MenuBar />
      <Toolbars />
      <div className="flex min-h-0 flex-1">
        <Viewport />
        <CommandPanel />
      </div>
      <Timeline />
      <StatusBar />
    </div>
  );
}
